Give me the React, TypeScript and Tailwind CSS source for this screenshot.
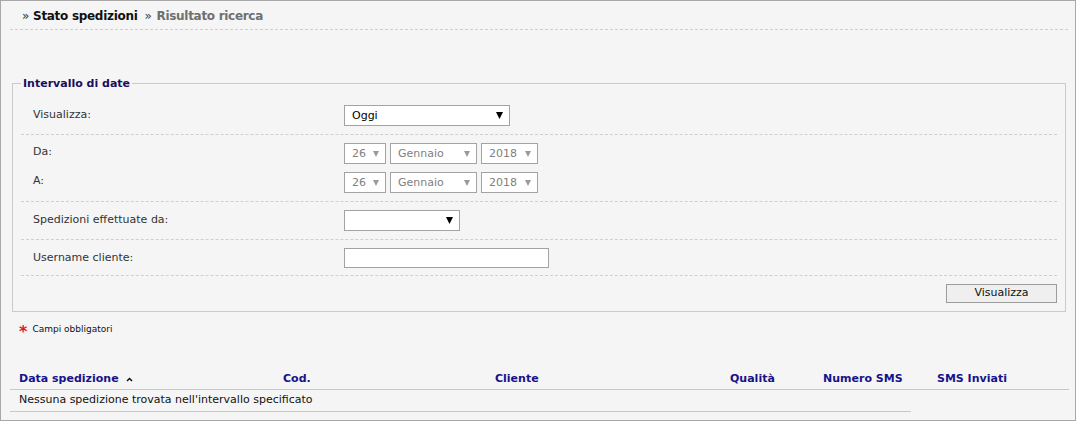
import React from "react";

const Arrow = ({ color = "#000", w = 7, h = 7 }: { color?: string; w?: number; h?: number }) => (
  <svg width={w} height={h} viewBox={`0 0 ${w} ${h}`} className="block">
    <polygon points={`0,0 ${w},0 ${w / 2},${h}`} fill={color} />
  </svg>
);

const DateSel = ({ value, w }: { value: string; w: string }) => (
  <div className={`${w} h-[21px] border border-[#a3a3a3] bg-white flex items-center justify-between pl-[7px] pr-[6px] text-[#808080]`}>
    <span className="pt-[2px]">{value}</span>
    <Arrow color="#9a9a9a" w={6} h={6} />
  </div>
);

export default function App() {
  return (
    <div
      className="w-[1076px] h-[421px] border border-[#a8a8a8] bg-[#f5f5f5] text-[11px] text-[#222]"
      style={{ fontFamily: '"DejaVu Sans", Verdana, sans-serif' }}
    >
      {/* breadcrumb */}
      <div className="ml-[9px] w-[1058px] h-[29px] border-b border-dashed border-[#cfcfcf] flex items-center pl-[12px] pt-[2px] text-[12px] font-bold tracking-[-0.3px]">
        <span className="text-[#333] font-normal mr-[4px]">»</span>
        <span className="text-[#111]">Stato spedizioni</span>
        <span className="text-[#444] font-normal ml-[7px] mr-[5px]">»</span>
        <span className="text-[#6f6f6f]">Risultato ricerca</span>
      </div>

      {/* fieldset */}
      <fieldset className="ml-[11px] mt-[47px] w-[1054px] border border-[#cacaca] px-[8px] pb-[8px]">
        <legend className="px-[2px] font-bold text-[#1a0e5c] leading-[13px]">Intervallo di date</legend>

        <div className="flex items-center pt-[15px] pb-[8px] border-b border-dashed border-[#cfcfcf]">
          <div className="w-[323px] pl-[12px] text-[#333]">Visualizza:</div>
          <div className="w-[166px] h-[21px] border border-[#a3a3a3] bg-white flex items-center justify-between pl-[7px] pr-[6px] text-black">
            <span className="pt-[2px]">Oggi</span>
            <Arrow />
          </div>
        </div>

        <div className="flex flex-col gap-[8px] pt-[8px] pb-[8px] border-b border-dashed border-[#cfcfcf]">
          <div className="flex items-center">
            <div className="w-[323px] pl-[12px] text-[#333] -mt-[2px]">Da:</div>
            <div className="flex gap-[4px]">
              <DateSel value="26" w="w-[42px]" />
              <DateSel value="Gennaio" w="w-[87px]" />
              <DateSel value="2018" w="w-[57px]" />
            </div>
          </div>
          <div className="flex items-center">
            <div className="w-[323px] pl-[12px] text-[#333] -mt-[2px]">A:</div>
            <div className="flex gap-[4px]">
              <DateSel value="26" w="w-[42px]" />
              <DateSel value="Gennaio" w="w-[87px]" />
              <DateSel value="2018" w="w-[57px]" />
            </div>
          </div>
        </div>

        <div className="flex items-center pt-[8px] pb-[8px] border-b border-dashed border-[#cfcfcf]">
          <div className="w-[323px] pl-[12px] text-[#333]">Spedizioni effettuate da:</div>
          <div className="w-[116px] h-[21px] border border-[#a3a3a3] bg-white flex items-center justify-end pr-[6px]">
            <Arrow />
          </div>
        </div>

        <div className="flex items-center pt-[8px] pb-[7px] border-b border-dashed border-[#cfcfcf]">
          <div className="w-[323px] pl-[12px] text-[#333]">Username cliente:</div>
          <div className="w-[205px] h-[20px] border border-[#a3a3a3] bg-white" />
        </div>

        <div className="flex justify-end pt-[8px]">
          <div className="w-[111px] h-[19px] border border-[#9c9c9c] bg-[#efefef] flex items-center justify-center text-[#111]">
            Visualizza
          </div>
        </div>
      </fieldset>

      {/* required note */}
      <div className="flex items-center h-[14px] mt-[11px] pl-[18px]">
        <span className="text-[#e21b1b] font-bold text-[16px] leading-[14px] mt-[4px] mr-[5px]">*</span>
        <span className="text-[9px] text-[#111]">Campi obbligatori</span>
      </div>

      {/* table */}
      <div className="ml-[9px] mt-[33px] w-[1059px] h-[20px] border-b border-[#c8c8c8] flex items-center font-bold text-[#17138a]">
        <div className="w-[264px] pl-[9px] flex items-center gap-[7px]">
          <span>Data spedizione</span>
          <svg width="7" height="5" viewBox="0 0 7 5" className="block">
            <polyline points="1,4 3.5,1.5 6,4" fill="none" stroke="#111" strokeWidth="1.5" />
          </svg>
        </div>
        <div className="w-[212px] pl-[9px]">Cod.</div>
        <div className="w-[235px] pl-[9px]">Cliente</div>
        <div className="w-[93px] pl-[9px]">Qualità</div>
        <div className="w-[114px] pl-[9px]">Numero SMS</div>
        <div className="flex-1 pl-[9px]">SMS Inviati</div>
      </div>
      <div className="ml-[9px] w-[901px] h-[22px] border-b border-[#c8c8c8] flex items-center pl-[9px] text-[#111]">
        Nessuna spedizione trovata nell'intervallo specificato
      </div>
    </div>
  );
}
